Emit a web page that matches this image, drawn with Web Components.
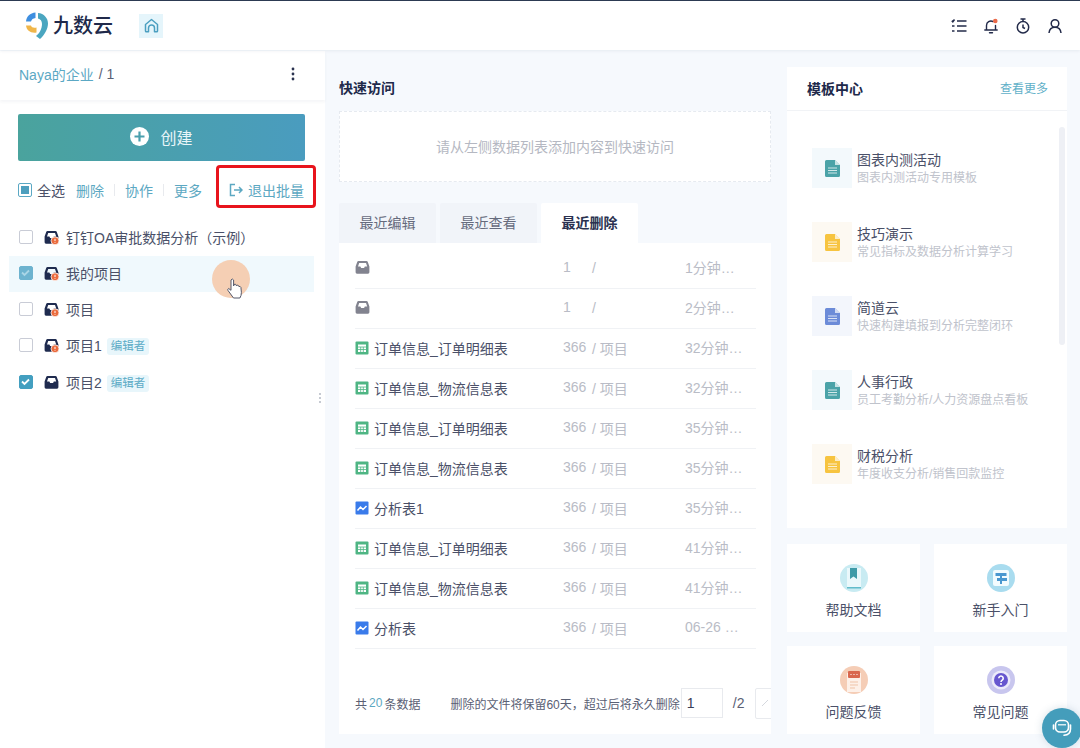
<!DOCTYPE html>
<html lang="zh"><head><meta charset="utf-8"><title>九数云</title>
<style>
html,body{margin:0;height:748px;overflow:hidden;background:#f6f9fd;font-family:"Liberation Sans","Noto Sans CJK SC",sans-serif;color:#4a5068}
</style></head><body>
<app-shell>
  <app-header slot="header"></app-header>
  <side-panel slot="side"></side-panel>
  <center-column slot="center"></center-column>
  <right-column slot="right"></right-column>
</app-shell>
<script>
const ICONS={
 inbox:(c,badge)=>`<svg width="15" height="15" viewBox="0 0 15 15"><path fill="${c}" fill-rule="evenodd" d="M3.500 1h8q.9 0 1.200.8l1.700 4.700v5.800q0 1.400-1.400 1.400H2q-1.400 0-1.400-1.400V6.500l1.700-4.700q.3-.8 1.200-.8zM4.200 3L3 6.500h2.400l.7 1.600h3l.7-1.600H12.200L11 3z"/>${badge?`<circle cx="11" cy="10.800" r="4" fill="#ea6a3c" stroke="#fff" stroke-width=".8"/><path d="M11 8.800v2.300M11 12v.7" stroke="#fff" stroke-width="1"/>`:''}</svg>`,
 sheet:`<svg width="14" height="14" viewBox="0 0 14 14"><rect x=".5" y=".5" width="13" height="13" rx="1" fill="#4fb584"/><path fill="#fff" d="M3 3.500h8v7.500H3z"/><path stroke="#4fb584" stroke-width=".8" d="M3 6h8M3 8.500h8M5.700 6v5M8.300 6v5"/></svg>`,
 chart:`<svg width="14" height="14" viewBox="0 0 14 14"><rect x=".5" y=".5" width="13" height="13" rx="1" fill="#3a7bea"/><path fill="none" stroke="#fff" stroke-width="1.500" d="M2.500 9.500l3-3.500 2.500 2.500 3.500-3.500"/></svg>`,
 doc:c=>`<svg width="15" height="17" viewBox="0 0 15 17"><path fill="${c}" d="M1.500 0H10l5 5v10.500a1.500 1.500 0 0 1-1.500 1.500h-12A1.500 1.500 0 0 1 0 15.500v-14A1.500 1.500 0 0 1 1.500 0z"/><path fill="#fff" opacity=".7" d="M10 0l5 5h-5z"/><path stroke="#fff" opacity=".75" d="M3 8h9M3 10.500h9M3 13h9"/></svg>`
};
function def(name,css,html){
  customElements.define(name,class extends HTMLElement{
    connectedCallback(){
      if(this.shadowRoot)return;
      const r=this.attachShadow({mode:'open'});
      r.innerHTML=`<style>${css}</style>`+(typeof html==='function'?html(this):html);
    }
  });
}
def('app-shell',`
:host{display:grid;width:1080px;height:748px;grid-template-rows:50px 697px;grid-template-columns:325px 448px 307px;position:relative;overflow:hidden;box-sizing:border-box;border-top:1px solid #2c3a52}
.h{grid-column:1/4;display:block;z-index:2}
`,`<div class="h"><slot name="header"></slot></div><slot name="side"></slot><slot name="center"></slot><slot name="right"></slot>`);

def('app-header',`
:host{display:flex;align-items:center;height:49px;background:#fff;box-shadow:0 1px 3px rgba(40,60,90,.08);padding:0 17px 0 25px}
.logo{display:flex;align-items:center;gap:5px;width:114px}
.logo b{font-size:20px;font-weight:500;color:#20294a;line-height:28px}
.home{width:24px;height:24px;background:#e5f5fb;display:flex;align-items:center;justify-content:center}
.right{margin-left:auto;display:flex;gap:16px;align-items:center}
.right svg{display:block}
`,`<div class="logo"><svg width="23" height="28" viewBox="0 0 23 28">
<path fill="#3f8fe0" d="M1 9.500C1.500 4.500 5 1 10.500.5L10.500 6C8 6.300 6.500 7.500 6 9.500Z"/>
<path fill="#4ba6c0" d="M13 1C19 1.500 23 6 23 11.500 23 17 19.500 23 15 27L11 24C14 22 17 17 17 12 17 9 15.500 7 13 6.500Z"/>
<path fill="#f0b64a" d="M1 13.500L6 13.500C6.500 15.500 8.500 16 11.500 15.500L11.500 20.500C6 21.500 1.500 18.500 1 13.500Z"/></svg><b>九数云</b></div>
<div class="home"><svg width="15" height="15" viewBox="0 0 15 15" fill="none" stroke="#4b9fc0" stroke-width="1.500" stroke-linejoin="round"><path d="M1.500 6.500L7.500 1.500l6 5v6.500a.8.800 0 0 1-.8.800H10.500V10a3 3 0 0 0-6 0v3.800H2.300a.8.800 0 0 1-.8-.8z"/></svg></div>
<div class="right">
<svg width="16" height="16" viewBox="0 0 16 16" fill="none" stroke="#232b4a" stroke-width="1.600"><path d="M6 3h9.500M6 8h9.500M6 13h9.500M.8 2.800l1 1 1.700-2.300M1 8h2.500M1 13h2.500"/></svg>
<svg width="16" height="16" viewBox="0 0 16 16" fill="none" stroke="#232b4a" stroke-width="1.400" stroke-linecap="round"><path d="M3.500 11.500V7.500a4.500 4.500 0 0 1 6.500-4M12.500 7.500v4M1.800 12h12.400M6.500 14.700h3"/><circle cx="12.300" cy="3" r="2.300" fill="#ea6a4a" stroke="none"/></svg>
<svg width="16" height="16" viewBox="0 0 16 16" fill="none" stroke="#232b4a" stroke-width="1.500"><circle cx="8" cy="9.300" r="5.700"/><path d="M5.500 1h5M8 1v2.500M8 6.500v3l2 1"/></svg>
<svg width="16" height="16" viewBox="0 0 16 16" fill="none" stroke="#232b4a" stroke-width="1.500"><circle cx="8" cy="5.500" r="3.800"/><path d="M2 15c.4-3.500 2.800-5.700 6-5.700s5.600 2.200 6 5.700"/></svg>
</div>`);

def('check-box',`
:host{display:block;width:14px;height:14px;box-sizing:border-box;border:1.500px solid #c9ccd6;border-radius:2px;background:#fff}
:host([on]){background:#439fc0;border-color:#439fc0}
:host([dim]){background:#6db3cf;border-color:#6db3cf}
:host([half]){background:#fff;border-color:#5ba8c4;padding:2px}
i{display:block;width:100%;height:100%;background:#4d9fbe}
svg{display:block}
`,h=>h.hasAttribute('half')?'<i></i>':h.hasAttribute('on')?`<svg width="11" height="11" viewBox="0 0 11 11" fill="none" stroke="${h.hasAttribute('dim')?'#a9d5e6':'#fff'}" stroke-width="1.800"><path d="M2 5.500l2.500 2.500 4.500-4.500"/></svg>`:'');

def('project-row',`
:host{display:flex;align-items:center;box-sizing:border-box;height:36px;margin:0 11px 0 9px;padding:0 10px 2px;font-size:14px;color:#4a5068}
:host([active]){background:#f0f9fd}
check-box{flex:none}
.ic{margin-left:11px;margin-right:7px;display:flex;flex:none}
.tag{margin:3px 0 0 5px;font-size:11.500px;line-height:17px;background:#e8f6fb;color:#5cabc6;padding:0 4px;border-radius:3px}
`,h=>`<check-box ${h.hasAttribute('checked')?'on':''} ${h.hasAttribute('active')?'dim':''}></check-box><span class="ic">${ICONS.inbox('#1f2b4f',!h.hasAttribute('nobadge'))}</span><slot></slot>${h.getAttribute('tag')?`<span class="tag">${h.getAttribute('tag')}</span>`:''}`);

def('side-panel',`
:host{display:block;background:#fff;position:relative;height:697px}
.crumb{display:flex;align-items:center;box-sizing:border-box;height:49px;padding:0 30px 3px 19px;font-size:14px;box-shadow:0 2px 3px rgba(40,60,90,.05)}
.crumb a{color:#5ba8c4}.crumb span{margin-left:5px;color:#5a6074}
.dots{margin-left:auto;display:flex}
.create{margin:14px 20px 0 18px;height:47px;box-sizing:border-box;padding-bottom:2px;border-radius:2px;background:linear-gradient(90deg,#4aa39d,#4a9cbf);display:flex;align-items:center;justify-content:center;gap:11px;color:#e8f5f8;font-size:16px}
.acts{display:flex;align-items:center;box-sizing:border-box;height:30px;margin-top:15px;padding:0 0 2px 18px;font-size:14px;color:#5ca8c2}
.acts .all{margin-left:5px;color:#4a5068;width:39px}
.acts .a{width:28px}
.sep{width:1px;height:12px;background:#e8eaee;margin:0 10px}
.exit{display:flex;align-items:center;gap:5px;margin-left:27px}
.list{margin-top:14px}
project-row:last-child{margin-top:1px}
.handle{position:absolute;left:319px;top:342px;display:grid;gap:2px}
.handle i{width:2px;height:2px;background:#c6cad2;display:block}
`,`<div class="crumb"><a>Naya的企业</a><span>/ 1</span><svg class="dots" width="4" height="14" viewBox="0 0 4 14" fill="#2b3350"><circle cx="2" cy="2" r="1.400"/><circle cx="2" cy="7" r="1.400"/><circle cx="2" cy="12" r="1.400"/></svg></div>
<div class="create"><svg width="19" height="19" viewBox="0 0 19 19"><circle cx="9.500" cy="9.500" r="9.500" fill="#fff"/><path d="M9.500 4.500v10M4.500 9.500h10" stroke="#4aa0ae" stroke-width="2.200"/></svg>创建</div>
<div class="acts"><check-box half></check-box><span class="all">全选</span><span class="a">删除</span><span class="sep"></span><span class="a">协作</span><span class="sep"></span><span class="a">更多</span>
<span class="exit"><svg width="14" height="14" viewBox="0 0 14 14" fill="none" stroke="#5ca8c2" stroke-width="1.500"><path d="M6 1.500H1.500v11H6M5 7h8M10 4l3 3-3 3"/></svg>退出批量</span></div>
<div class="list">
<project-row>钉钉OA审批数据分析&#xFF08;示例&#xFF09;</project-row>
<project-row active checked>我的项目</project-row>
<project-row>项目</project-row>
<project-row tag="编辑者">项目1</project-row>
<project-row checked nobadge tag="编辑者">项目2</project-row>
</div>
<div class="handle"><i></i><i></i><i></i></div>`);

def('tab-item',`
:host{display:flex;align-items:center;justify-content:center;box-sizing:border-box;width:97px;height:40px;padding-bottom:3px;background:#f1f4f9;font-size:14px;color:#666b7d;border-radius:2px 2px 0 0}
:host([active]){background:#fff;color:#2a3150;font-weight:700}
`,`<slot></slot>`);

def('file-row',`
:host{display:grid;grid-template-columns:208px 29px 93px 1fr;align-items:center;height:40px;box-sizing:border-box;padding-bottom:2px;border-bottom:1px solid #f0f2f5;font-size:14px;color:#4a5068}
.n{display:flex;align-items:center;gap:5px}
.n svg{flex:none;display:block}
.m{color:#b9bcc6;font-size:14px}
.u{margin-bottom:2px}
`,h=>{const t=h.getAttribute('type');const ic=t==='sheet'?ICONS.sheet:t==='chart'?ICONS.chart:ICONS.inbox('#82838f',false);
return `<div class="n">${ic}<slot></slot></div><span class="m u">${h.getAttribute('size')}</span><span class="m">/ ${h.getAttribute('dir')||''}</span><span class="m u">${h.getAttribute('time')}</span>`});

def('center-column',`
:host{display:flex;flex-direction:column;padding:16px 0 0 14px;width:432px;box-sizing:content-box}
h2{margin:0;height:44px;box-sizing:border-box;padding-bottom:4px;display:flex;align-items:center;font-size:14px;font-weight:700;color:#20294a}
.quick{height:71px;box-sizing:border-box;padding-bottom:2px;border:1px dashed #e6eaf0;background:#fff;display:flex;align-items:center;justify-content:center;font-size:14px;color:#b5b8c2}
.tabs{display:flex;gap:4px;margin-top:21px}
.panel{background:#fff;height:491px;box-sizing:border-box;padding:6px 15px 0 16px;display:flex;flex-direction:column;overflow:hidden;position:relative}
.foot{display:flex;align-items:center;margin-top:39px;height:30px;font-size:12px;color:#5a6074;white-space:nowrap}
.foot b{font-weight:400;color:#5ca8c2;margin:0 2px}
.foot .s{width:1px;height:16px;background:#eceef2;margin:0 15px}
.inp{flex:none;width:42px;height:30px;margin-left:1px;box-sizing:border-box;border:1px solid #e8eaee;font-size:14px;color:#3a4058;display:flex;align-items:center;padding-left:5px}
.pg{flex:none;margin-left:10px;font-size:14px;width:12px}
.nx{margin-left:10px;flex:none;width:20px;height:31px;box-sizing:border-box;border:1px solid #e8eaee;border-radius:2px;display:flex;align-items:center;justify-content:center}
`,`<h2>快速访问</h2><div class="quick">请从左侧数据列表添加内容到快速访问</div>
<div class="tabs"><tab-item>最近编辑</tab-item><tab-item>最近查看</tab-item><tab-item active>最近删除</tab-item></div>
<div class="panel">
<file-row size="1" time="1分钟…"></file-row>
<file-row size="1" time="2分钟…"></file-row>
<file-row type="sheet" size="366" dir="项目" time="32分钟…">订单信息_订单明细表</file-row>
<file-row type="sheet" size="366" dir="项目" time="32分钟…">订单信息_物流信息表</file-row>
<file-row type="sheet" size="366" dir="项目" time="35分钟…">订单信息_订单明细表</file-row>
<file-row type="sheet" size="366" dir="项目" time="35分钟…">订单信息_物流信息表</file-row>
<file-row type="chart" size="366" dir="项目" time="35分钟…">分析表1</file-row>
<file-row type="sheet" size="366" dir="项目" time="41分钟…">订单信息_订单明细表</file-row>
<file-row type="sheet" size="366" dir="项目" time="41分钟…">订单信息_物流信息表</file-row>
<file-row type="chart" size="366" dir="项目" time="06-26 …">分析表</file-row>
<div class="foot">共<b>20</b>条数据<span class="s"></span>删除的文件将保留60天&#xFF0C;超过后将永久删除<span class="inp">1</span><span class="pg">/2</span><span class="nx"><svg width="8" height="8" viewBox="0 0 8 8" fill="none" stroke="#d5d8de"><path d="M1 7l6-6"/></svg></span></div>
</div>`);

def('template-item',`
:host{display:flex;align-items:center;height:40px;margin-bottom:34px;gap:5px}
.box{width:40px;height:40px;display:flex;align-items:center;justify-content:center;flex:none}
.t{font-size:14px;line-height:18px;color:#4a5068}
.s{font-size:12px;line-height:16px;margin-top:1px;color:#c0c3cc;white-space:nowrap}
`,h=>`<div class="box" style="background:${h.getAttribute('bg')}">${ICONS.doc(h.getAttribute('color'))}</div><div><div class="t">${h.getAttribute('name')}</div><div class="s">${h.getAttribute('sub')}</div></div>`);

def('help-card',`
:host{display:flex;flex-direction:column;align-items:center;background:#fff;height:88px;box-sizing:border-box;padding-top:20px;font-size:14px;color:#4a5068;gap:8px;line-height:20px}
svg{display:block}
`,h=>`<slot name="icon"></slot><slot></slot>`);

def('right-column',`
:host{display:flex;flex-direction:column;padding:16px 0 0 14px;width:280px}
.card{background:#fff;height:461px;position:relative;overflow:hidden}
.head{display:flex;align-items:center;justify-content:space-between;height:44px;box-sizing:border-box;padding:0 19px 2px 20px;border-bottom:1px solid #f1f3f6}
.head b{font-size:14px;color:#20294a}
.head a{font-size:12px;color:#5fb0c8}
.body{padding:37px 0 0 25px}
.bar{position:absolute;left:272px;top:60px;width:6px;height:218px;background:#eef0f5;border-radius:3px}
.grid{display:grid;grid-template-columns:133px 133px;gap:14px;margin-top:16px}
`,`<div class="card"><div class="head"><b>模板中心</b><a>查看更多</a></div>
<div class="body">
<template-item bg="#f3f9fc" color="#4ba3a8" name="图表内测活动" sub="图表内测活动专用模板"></template-item>
<template-item bg="#fdf9f2" color="#f7c440" name="技巧演示" sub="常见指标及数据分析计算学习"></template-item>
<template-item bg="#f3f6fc" color="#6c8bd8" name="简道云" sub="快速构建填报到分析完整闭环"></template-item>
<template-item bg="#f3f9fc" color="#4ba3a8" name="人事行政" sub="员工考勤分析/人力资源盘点看板"></template-item>
<template-item bg="#fdf9f2" color="#f7c440" name="财税分析" sub="年度收支分析/销售回款监控"></template-item>
</div><div class="bar"></div></div>
<div class="grid">
<help-card><svg slot="icon" width="28" height="28" viewBox="0 0 28 28"><circle cx="14" cy="14" r="14" fill="#c8ebf2"/><path fill="#eaf8fb" d="M7 4h14v19H7z"/><path fill="#3f9ba8" d="M10 4h7v11l-3.500-2.500L10 15z"/><path fill="#62bccb" d="M7 23h14v1.500H7z"/></svg>帮助文档</help-card>
<help-card><svg slot="icon" width="28" height="28" viewBox="0 0 28 28"><circle cx="14" cy="14" r="14" fill="#a9dcef"/><rect x="6" y="6" width="16" height="16" rx="2" fill="#f2fbfe"/><path fill="#4a97cf" d="M8.500 9h11v3h-11zM10 14h10v3H10zM13 9h2v11h-2z"/></svg>新手入门</help-card>
<help-card><svg slot="icon" width="28" height="28" viewBox="0 0 28 28"><circle cx="14" cy="14" r="14" fill="#f5cdb6"/><path fill="#fdf0e8" d="M7 7h14v19H7z"/><rect x="8" y="5" width="12" height="7" rx="1" fill="#d9674e"/><path d="M10.500 8.500h1M13.500 8.500h1M16.500 8.500h1" stroke="#fff"/><path d="M10 16h8M10 19h8M10 22h5" stroke="#efc3a8"/></svg>问题反馈</help-card>
<help-card><svg slot="icon" width="28" height="28" viewBox="0 0 28 28"><circle cx="14" cy="14" r="14" fill="#c8c6ee"/><circle cx="14" cy="14" r="9.500" fill="#ecebfa"/><circle cx="14" cy="14" r="7" fill="#6757cf"/><path fill="none" stroke="#fff" stroke-width="1.600" d="M11.800 12.200a2.200 2.200 0 1 1 3.400 1.900c-.8.500-1.200 1-1.200 1.900"/><circle cx="14" cy="18" r="1" fill="#fff"/></svg>常见问题</help-card>
</div>`);

def('page-overlays',`
:host{display:block}
.red{position:absolute;left:216px;top:165px;width:100px;height:43px;box-sizing:border-box;border:3px solid #e8141c;border-radius:4px}
.spot{position:absolute;left:212px;top:260px;width:38px;height:38px;border-radius:50%;background:#f5cfb4}
.hand{position:absolute;left:226px;top:277px}
.chat{position:absolute;left:1042px;top:708px;width:40px;height:40px;border-radius:50%;background:#449dbb;box-shadow:0 0 8px rgba(60,100,130,.2);display:flex;align-items:center;justify-content:center}
`,`<div class="red"></div><div class="spot"></div>
<svg class="hand" width="18" height="24" viewBox="0 0 18 24"><path fill="#fff" stroke="#55586a" stroke-width="1" stroke-linejoin="round" d="M5 3q1.300-2 2.600 0v6l.4-1.500q1.300-.8 2.100.3l.3 1 .3-.5q1.400-.5 2 .5l.2.700q1.500-.4 2 .8l.5 5q0 3.500-1.500 5.700H7.500L2 13.500q-.8-1.500.7-2l2.300 1.800z"/></svg>
<div class="chat"><svg width="22" height="22" viewBox="0 0 22 22" fill="none" stroke="#fff" stroke-width="1.600"><rect x="4.500" y="3.500" width="13" height="11.500" rx="4.500"/><path d="M7 7.800h8" stroke-width="1.200"/><path d="M2.500 8v4M19.500 8v4c0 4-2.500 6-6.500 6.300" stroke-linecap="round"/></svg></div>`);
document.body.appendChild(document.createElement('page-overlays'));
</script>
</body></html>
